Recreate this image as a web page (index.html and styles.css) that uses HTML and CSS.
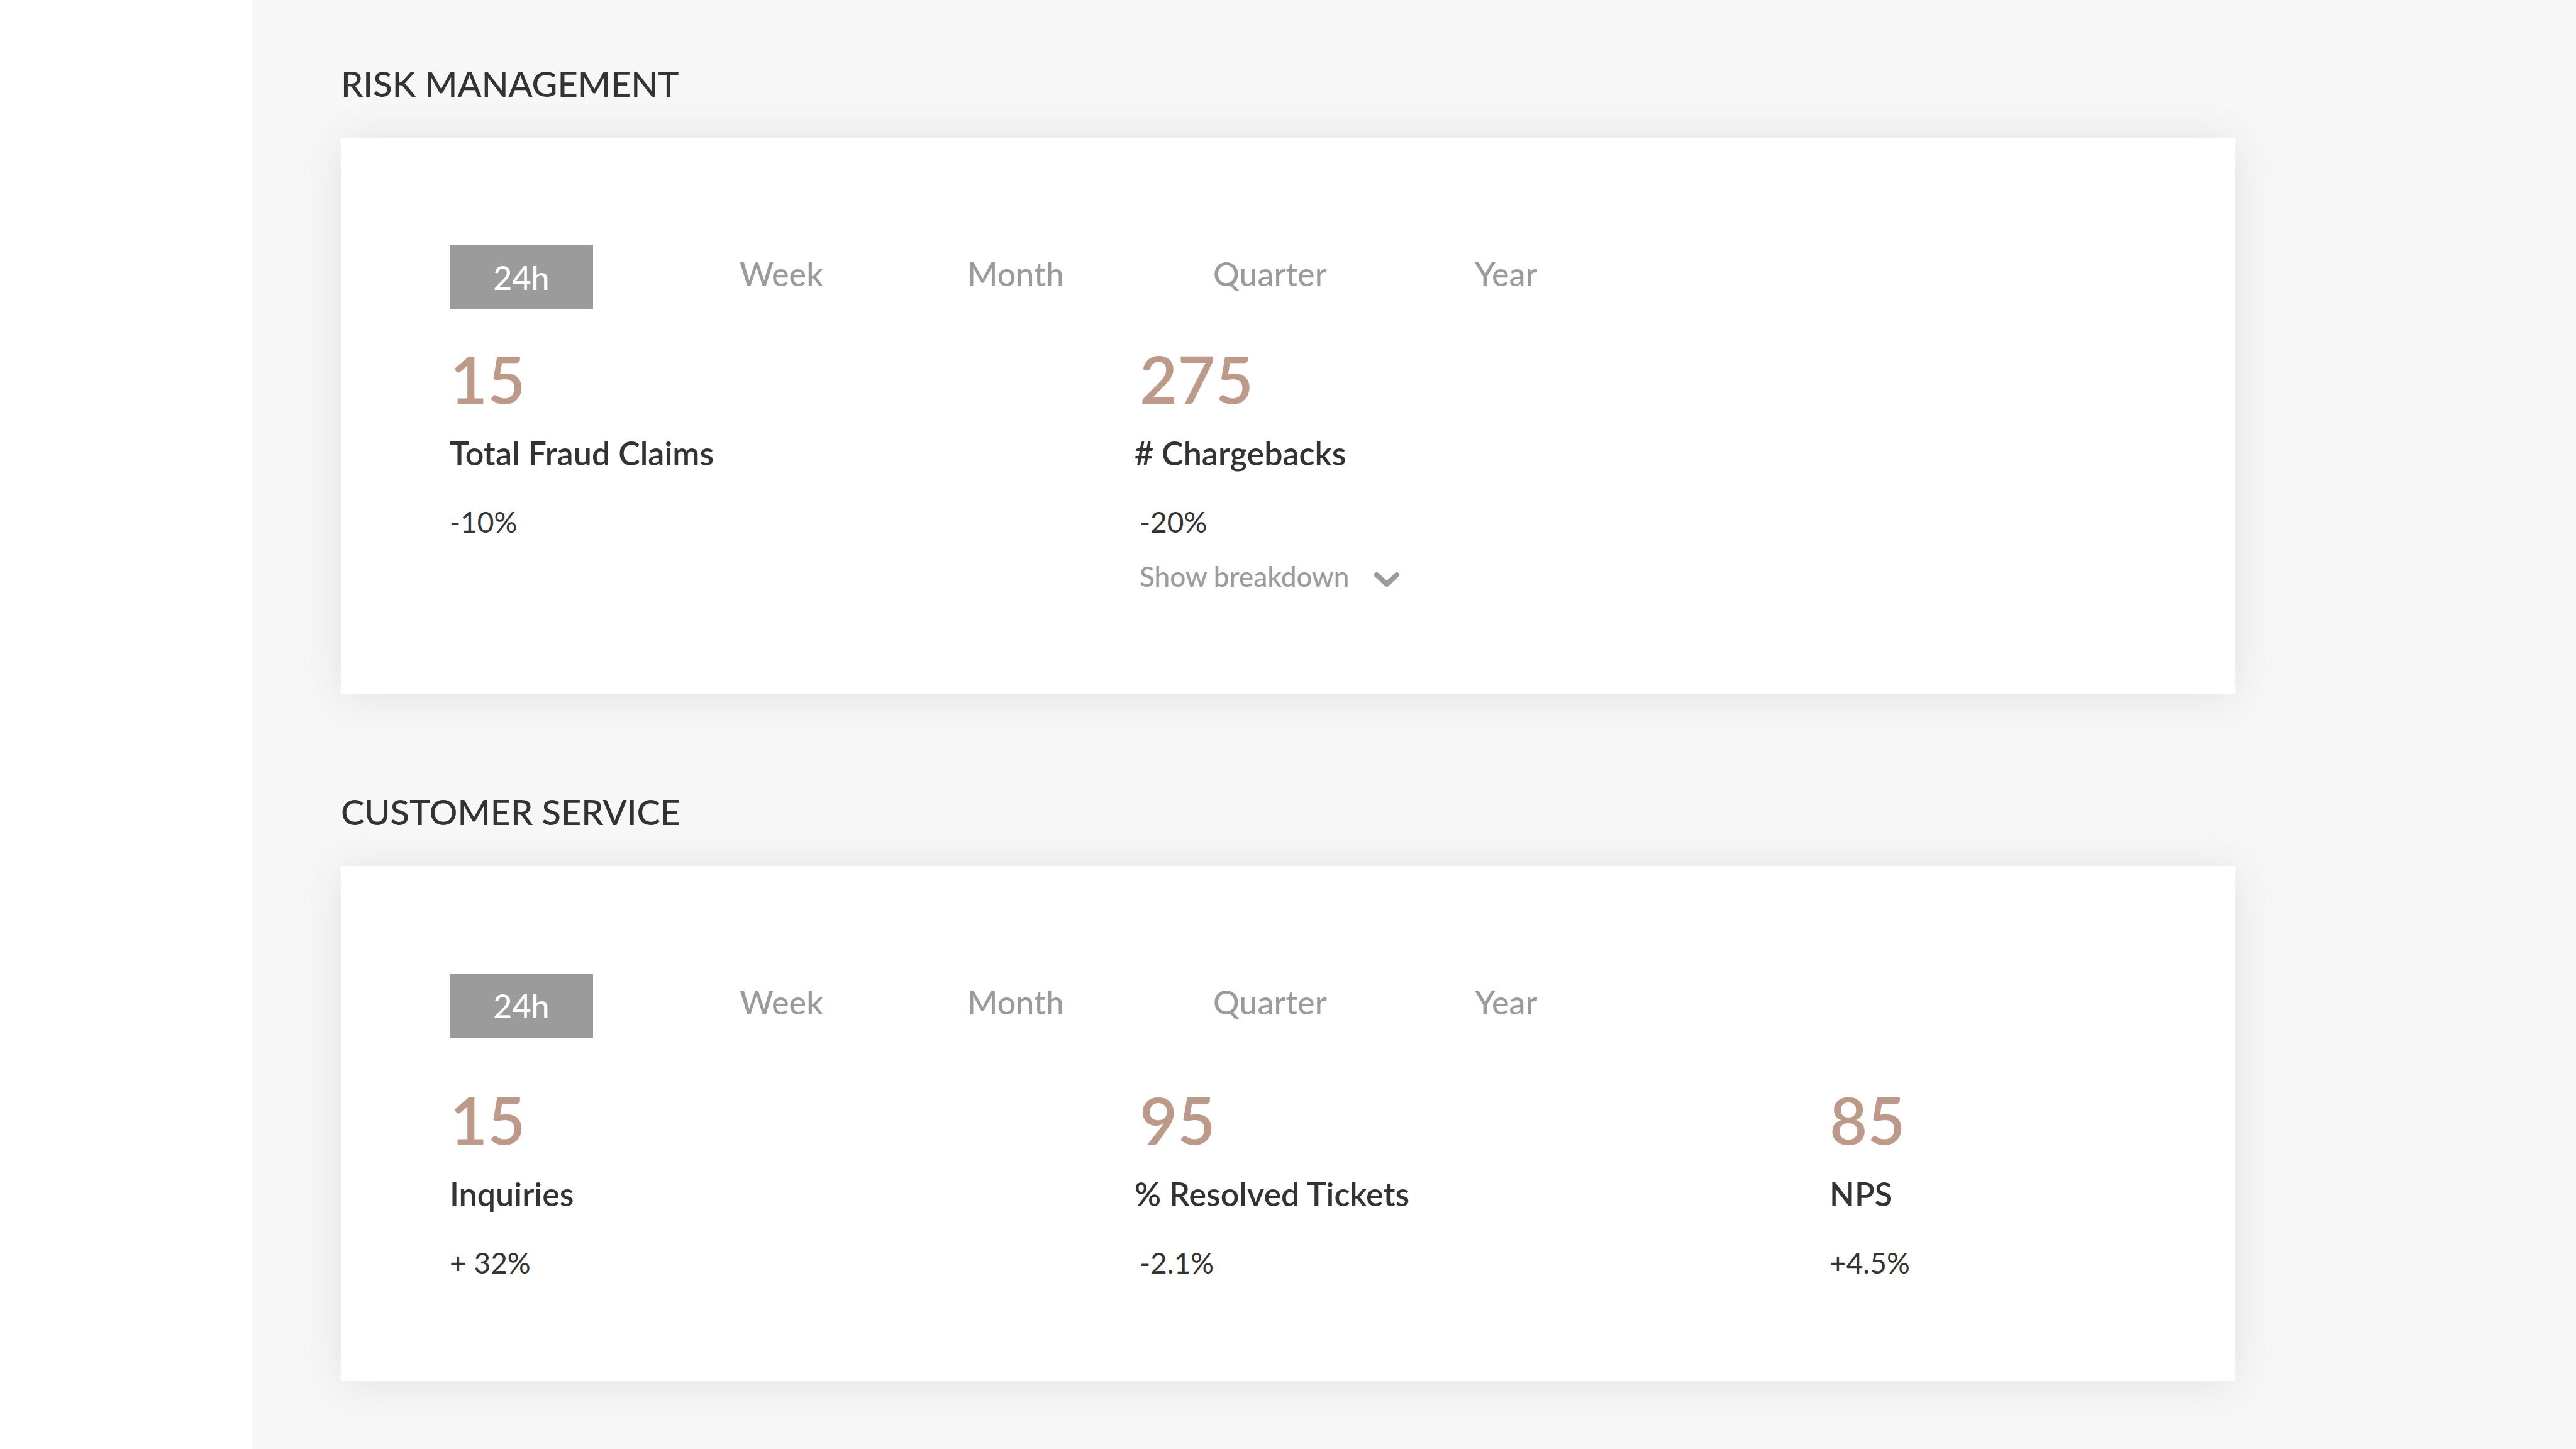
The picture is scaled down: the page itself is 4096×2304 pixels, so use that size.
FILE: index.html
```html
<!DOCTYPE html>
<html lang="en">
<head>
  <meta charset="utf-8">
  <meta name="viewport" content="width=device-width, initial-scale=1">
  <title>Dashboard</title>
  <link rel="stylesheet" href="styles.css">
</head>
<body>
  <div class="layout">
    <aside class="sidebar"></aside>
    <main class="content">
      <section class="section">
        <h2 class="section-title">RISK MANAGEMENT</h2>
        <div class="card">
          <div class="periods">
            <button class="period period-active" type="button">24h</button>
            <button class="period" type="button">Week</button>
            <button class="period" type="button">Month</button>
            <button class="period" type="button">Quarter</button>
            <button class="period" type="button">Year</button>
          </div>
          <div class="stats stats-compact">
            <div class="stat">
              <p class="stat-value">15</p>
              <h3 class="stat-label">Total Fraud Claims</h3>
              <p class="stat-change">-10%</p>
            </div>
            <div class="stat">
              <p class="stat-value">275</p>
              <h3 class="stat-label stat-label-hanging"># Chargebacks</h3>
              <p class="stat-change">-20%</p>
              <button class="breakdown" type="button">
                Show breakdown
                <svg class="chevron" viewBox="0 0 40 56" aria-hidden="true">
                  <path d="M4 26 20 41 36 26"/>
                </svg>
              </button>
            </div>
          </div>
        </div>
      </section>

      <section class="section">
        <h2 class="section-title">CUSTOMER SERVICE</h2>
        <div class="card">
          <div class="periods">
            <button class="period period-active" type="button">24h</button>
            <button class="period" type="button">Week</button>
            <button class="period" type="button">Month</button>
            <button class="period" type="button">Quarter</button>
            <button class="period" type="button">Year</button>
          </div>
          <div class="stats">
            <div class="stat">
              <p class="stat-value">15</p>
              <h3 class="stat-label">Inquiries</h3>
              <p class="stat-change">+ 32%</p>
            </div>
            <div class="stat">
              <p class="stat-value">95</p>
              <h3 class="stat-label stat-label-hanging">% Resolved Tickets</h3>
              <p class="stat-change">-2.1%</p>
            </div>
            <div class="stat">
              <p class="stat-value">85</p>
              <h3 class="stat-label">NPS</h3>
              <p class="stat-change">+4.5%</p>
            </div>
          </div>
        </div>
      </section>
    </main>
  </div>
</body>
</html>
```
FILE: styles.css
```css
* {
  box-sizing: border-box;
}

body,
h2,
h3,
p {
  margin: 0;
}

body {
  background: #f7f7f7;
  color: #333;
  font-family: Lato, "Open Sans", sans-serif;
}

button {
  padding: 0;
  border: 0;
  background: none;
  color: #9b9b9b;
  font-family: inherit;
  font-weight: 500;
  text-align: left;
  cursor: pointer;
}

.layout {
  display: grid;
  grid-template-columns: 401px 1fr;
  min-height: 100vh;
}

.sidebar {
  background: #fff;
}

.content {
  display: flex;
  flex-direction: column;
  gap: 153px;
  padding: 99px 542px 98px 141px;
}

.section {
  display: flex;
  flex-direction: column;
  gap: 52px;
}

.section-title {
  font-size: 56px;
  font-weight: 500;
  line-height: 68px;
}

.card {
  padding: 171px 0 160px 173px;
  background: #fff;
  box-shadow: 0 4px 68px rgba(0, 0, 0, 0.09);
}

/* Period switch */
.periods {
  display: grid;
  grid-template-columns: 461fr 362fr 391fr 416fr 1209fr;
  align-items: start;
  justify-items: start;
}

.period {
  font-size: 52px;
  line-height: 90px;
}

.period-active {
  width: 228px;
  background: #9b9b9b;
  color: #fff;
  line-height: 102px;
  text-align: center;
}

/* Figures */
.stats {
  display: grid;
  grid-template-columns: 1097fr 1097fr 645fr;
  margin-top: 68px;
}

.stats-compact {
  margin-top: 48px;
}

.stat-value {
  color: #bd998a;
  font-size: 104px;
  font-weight: 600;
  line-height: 124px;
}

.stat-label {
  margin-top: 24px;
  font-size: 52px;
  font-weight: 600;
  line-height: 64px;
}

/* A leading symbol hangs outside the column edge */
.stat-label-hanging {
  margin-left: -8px;
}

.stat-change {
  margin-top: 50px;
  font-size: 46px;
  line-height: 56px;
}

.breakdown {
  display: flex;
  align-items: center;
  gap: 40px;
  margin-top: 30px;
  font-size: 44px;
  line-height: 56px;
}

.chevron {
  width: 40px;
  height: 56px;
  fill: none;
  stroke: currentColor;
  stroke-width: 8;
  stroke-linecap: round;
  stroke-linejoin: round;
}
```
